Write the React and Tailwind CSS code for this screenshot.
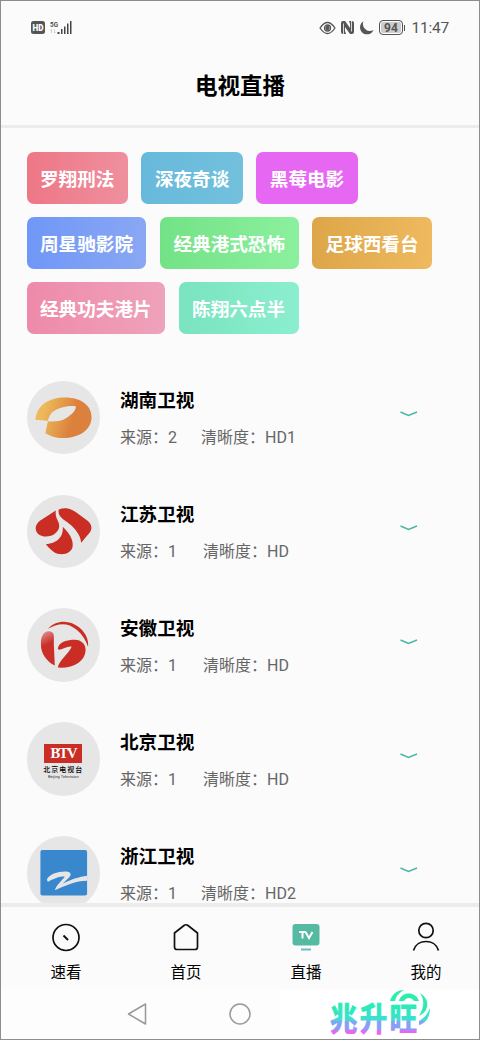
import React from "react";

const tags = [
  { name: "罗翔刑法", color: "bg-linear-to-r from-[#ee7786] to-[#ef8f9e]" },
  { name: "深夜奇谈", color: "bg-linear-to-r from-[#67b9dc] to-[#72c0dc]" },
  { name: "黑莓电影", color: "bg-[#e667f1]" },
  { name: "周星驰影院", color: "bg-linear-to-r from-[#7097f8] to-[#89a7f3]" },
  { name: "经典港式恐怖", color: "bg-linear-to-r from-[#73e286] to-[#8bf09e]" },
  { name: "足球西看台", color: "bg-linear-to-r from-[#dda648] to-[#efb95f]" },
  { name: "经典功夫港片", color: "bg-linear-to-r from-[#ee8aaa] to-[#efa2bb]" },
  { name: "陈翔六点半", color: "bg-linear-to-r from-[#7ae3bf] to-[#8befcf]" },
];

function HunanLogo() {
  return (
    <svg viewBox="0 0 74 74" className="h-full w-full">
      <defs>
        <linearGradient id="hunan" x1="0" y1="0" x2="1" y2="0.2">
          <stop offset="0.2" stopColor="#edb95a" />
          <stop offset="0.75" stopColor="#dc803d" />
        </linearGradient>
      </defs>
      <path
        d="M8.500 39C10 24 22 16.500 38 16.500C55 16.500 65.500 25 65 37C64.500 49 53 57.500 36 57.500C29 57.500 23 55 18.500 52.500L21 40.500C27 41.500 35 40.500 40 37C45 34 50 29 49 25.500C42 24 31 27 26 31C22.500 34.500 21.500 38 21 40Z"
        fill="url(#hunan)"
      />
    </svg>
  );
}

function JiangsuLogo() {
  return (
    <svg viewBox="0 0 74 74" className="h-full w-full" fill="#c92d23">
      <path d="M29 15.500L13 26C8 30 7.500 35 11 39C15 43 24 42.500 28 39C33 35 33.500 31 31 26C29 22 28.500 19 29 15.500Z" />
      <path d="M32 14.500C38 12 44 13.500 49 17L61 26C66 30 65.500 35 63 38L54.500 48C54 42 51 37 45 31C40 26 30 23 32 14.500Z" />
      <path d="M36 32C42 38 46.500 44 46 51C45.500 57 40 60 33 59.500C27 59 22 53 19 49.500C28 49 37 44 36 32Z" />
    </svg>
  );
}

function AnhuiLogo() {
  return (
    <svg viewBox="0 0 74 74" className="h-full w-full">
      <defs>
        <linearGradient id="anhui" x1="0" y1="0" x2="0.2" y2="1">
          <stop offset="0" stopColor="#e39a9a" />
          <stop offset="0.45" stopColor="#ca3029" />
        </linearGradient>
      </defs>
      <path d="M21 21C29 12 43 11 53 20C60 26 62 33 61.500 39C59 33 57 28 50 22C41 14 31 15 21 21Z" fill="#c92d23" />
      <path d="M15 29C17 23 23 22 26 25C27.500 27 27 31 27 36L28 58C20 54 14 46 14 37C14 34 14 31 15 29Z" fill="url(#anhui)" />
      <path d="M31 41C32 34 41 32 48 32C55 32 59.500 37 59 43C58 54 47 61 31 60C32 53 42 46 45 39C41 38 36 42 32 42Z" fill="#c92d23" />
    </svg>
  );
}

function BeijingLogo() {
  return (
    <div className="flex h-full w-full flex-col items-center pt-[22px]">
      <div className="flex h-[19px] w-[38px] items-center justify-center bg-[#c92d23] font-['Liberation_Serif',serif] text-[14.500px] font-bold tracking-[-1.500px] text-white">
        BTV
      </div>
      <div className="mt-[3px] text-[7px] leading-[8px] font-medium tracking-[1px] whitespace-nowrap text-black">
        北京电视台
      </div>
      <div className="text-[4px] leading-[5px] whitespace-nowrap text-[#333]">Beijing Television</div>
    </div>
  );
}

function ZhejiangLogo() {
  return (
    <svg viewBox="0 0 74 74" className="h-full w-full">
      <rect x="13.500" y="14" width="47" height="46" rx="2" fill="#3987cc" />
      <path
        d="M20 44C22 38 34 35 41 36C46 37 44 41 40 44L36 48C43 44 53 41 60.500 40V45C49 45 39 50 28 54.500C30 49 35 45 38 41C32 40 26 44 21 46Z"
        fill="#e6e6e6"
      />
    </svg>
  );
}

const channels = [
  { name: "湖南卫视", source: 2, quality: "HD1", gap: "ml-6", Logo: HunanLogo },
  { name: "江苏卫视", source: 1, quality: "HD", gap: "ml-[26px]", Logo: JiangsuLogo },
  { name: "安徽卫视", source: 1, quality: "HD", gap: "ml-[26px]", Logo: AnhuiLogo },
  { name: "北京卫视", source: 1, quality: "HD", gap: "ml-[26px]", Logo: BeijingLogo },
  { name: "浙江卫视", source: 1, quality: "HD2", gap: "ml-6", Logo: ZhejiangLogo },
];

function StatusBar() {
  return (
    <div className="flex h-[53px] shrink-0 items-center justify-between pr-[30px] pl-[30px] text-[#555]">
      <div className="flex items-center gap-[5px]">
        <svg width="14" height="13" viewBox="0 0 14 13">
          <rect width="14" height="13" rx="2.500" fill="#555" />
          <text x="1.500" y="9.700" fontSize="9" fontWeight="900" textLength="11" lengthAdjust="spacingAndGlyphs" fill="#fff">HD</text>
        </svg>
        <svg width="23" height="15" viewBox="0 0 23 15" fill="#444">
          <text x="0" y="6.500" fontSize="8" fontWeight="600" textLength="8" lengthAdjust="spacingAndGlyphs">5G</text>
          <path d="M1.500 9.500V13M0.500 10.500L1.500 9.500M4.500 9.500V13M5.500 12L4.500 13" stroke="#bbb" strokeWidth="0.700" />
          <path d="M7.500 12h2v2h-2zM11 9h1.500v5H11zM14 6.500h1.500V14H14zM17 3.500h1.500V14H17zM20 1h1.500v13H20z" />
        </svg>
      </div>

      <div className="flex items-center">
        <svg width="17" height="14" viewBox="0 0 17 14" fill="none" stroke="#555" strokeWidth="1.300">
          <path d="M1 7Q8.500 -4 16 7Q8.500 18 1 7Z" />
          <circle cx="8.500" cy="7" r="3" />
          <circle cx="8.500" cy="7" r="1.500" fill="#555" />
        </svg>
        <svg className="ml-[5px]" width="13" height="13" viewBox="0 0 13 13">
          <path d="M0 2Q0 0 2 0H4L9 7V3L8 0H11Q13 0 13 2V11Q13 13 11 13H9L4 6V10L5 13H2Q0 13 0 11Z" fill="#555" />
          <path d="M2.500 2.500V13M10.500 0V10.500" stroke="#fbfbfb" strokeWidth="0.800" />
        </svg>
        <svg className="ml-[5px]" width="15" height="14" viewBox="0 0 15 14" fill="#555">
          <path d="M4.500 0.300A7 7 0 1 0 14.500 9A7 7 0 0 1 4.500 0.300Z" />
        </svg>
        <div className="ml-[5px] flex h-[15px] w-[24px] items-center justify-center rounded-[4px] border border-[#555] bg-[#ccc] text-[12px] leading-3 font-bold ring-1 ring-white ring-inset">
          94
        </div>
        <div className="ml-[1px] h-[6px] w-[1.500px] bg-[#555]" />
        <span className="ml-[6px] text-[15.500px] leading-4 tracking-[-0.200px]">11:47</span>
      </div>
    </div>
  );
}

function ChannelRow({ channel }) {
  const { name, source, quality, gap, Logo } = channel;
  return (
    <div className="flex h-[113.800px] shrink-0 items-start">
      <div className="h-[73.500px] w-[73.500px] shrink-0 overflow-hidden rounded-full bg-[#e6e6e6]">
        <Logo />
      </div>
      <div className="ml-5 w-[280px] pt-[6.500px]">
        <h2 className="text-[18.600px] leading-[28px] font-bold text-black">{name}</h2>
        <p className="mt-[11px] flex text-[16px] leading-6 text-[#666]">
          <span>来源：{source}</span>
          <span className={gap}>清晰度：{quality}</span>
        </p>
      </div>
      <svg className="mt-[30.500px]" width="18" height="6" viewBox="0 0 18 6" fill="none" stroke="#48b8a3" strokeWidth="1.500">
        <path d="M0.500 1L8.500 4.500L17 1" />
      </svg>
    </div>
  );
}

function NavItem({ label, children }) {
  return (
    <div className="flex w-[120px] shrink-0 flex-col items-center pt-[14px]">
      <svg width="32" height="32" viewBox="0 0 32 32" fill="none" stroke="#111" strokeWidth="1.700">
        {children}
      </svg>
      <span className="mt-[9px] text-[15.500px] leading-[23px] text-black">{label}</span>
    </div>
  );
}

function Watermark() {
  return (
    <div className="absolute -right-px -bottom-px h-[50px] w-[200px] bg-white">
      <svg width="200" height="50" viewBox="0 0 200 50">
        <defs>
          <linearGradient id="brand" gradientUnits="userSpaceOnUse" x1="0" y1="0" x2="0" y2="46">
            <stop offset="0" stopColor="#2bf0a5" />
            <stop offset="0.450" stopColor="#2ee9bd" />
            <stop offset="0.660" stopColor="#42ddd4" />
            <stop offset="0.680" stopColor="#83a4f3" />
            <stop offset="0.870" stopColor="#8b9cf5" />
            <stop offset="0.890" stopColor="#ee63f0" />
          </linearGradient>
        </defs>
        <text
          transform="scale(0.850 1)"
          x="58.500"
          y="41.500"
          fontSize="33"
          fontWeight="900"
          letterSpacing="2"
          fill="url(#brand)"
        >
          兆升旺
        </text>
        <g fill="url(#brand)">
          <path d="M110 11C112 3 119 0 124 0C119 3 116 6 115 11Z" />
          <path d="M119 11C121 1 136 1 139 11H134C132 7 126 7 124 11Z" />
          <path d="M140 3C150 9 150 21 139 26C144 18 145 10 140 3Z" />
          <path d="M150 18C150 29 144 34 139 35V31C144 28 148 24 150 18Z" />
        </g>
      </svg>
    </div>
  );
}

function App() {
  return (
    <div className="relative flex h-[1040px] w-[480px] flex-col overflow-hidden border border-[#8d8d8d] bg-[#fbfbfb] font-[Roboto,'Noto_Sans_CJK_SC',sans-serif]">
      <StatusBar />
      <header className="flex h-[74px] shrink-0 items-center justify-center border-b-[3px] border-[#ececec] pb-[8px]">
        <h1 className="text-[22.500px] leading-8 font-bold text-black">电视直播</h1>
      </header>

      <main className="flex min-h-0 flex-1 flex-col overflow-hidden px-[25.500px] pt-[23.500px]">
        <div className="flex shrink-0 flex-wrap gap-x-[13.500px] gap-y-[13.200px]">
          {tags.map((t) => (
            <div
              key={t.name}
              className={`flex h-[52px] items-center rounded-[7px] px-[13.500px] pt-[6px] text-[18.600px] font-bold text-white ${t.color}`}
            >
              {t.name}
            </div>
          ))}
        </div>

        <div className="mt-[47px] flex flex-col">
          {channels.map((c) => (
            <ChannelRow key={c.name} channel={c} />
          ))}
        </div>
      </main>

      <nav className="flex h-[85px] shrink-0 overflow-hidden border-t-4 border-[#ececec] pl-[5px]">
        <NavItem label="速看">
          <circle cx="16" cy="16.500" r="13" />
          <path d="M13.500 14.500L18 19" strokeWidth="2" />
        </NavItem>
        <NavItem label="首页">
          <path d="M4.500 12L14 4.500Q16 3 18 4.500L27.500 12V26Q27.500 28.500 25 28.500H7Q4.500 28.500 4.500 26Z" />
        </NavItem>
        <NavItem label="直播">
          <rect x="2.500" y="3" width="27" height="21.500" rx="3" fill="#56b9a2" stroke="none" />
          <path d="M9 11H16M12.500 11V17.500M15.500 11L19 17L22.500 11" stroke="#fff" strokeWidth="2" />
          <path d="M11 28.500H21" stroke="#6bbcc8" strokeWidth="2" />
        </NavItem>
        <NavItem label="我的">
          <circle cx="16" cy="9.500" r="7.200" />
          <path d="M3.500 29.500C7 17.500 25 17.500 28.500 29.500" />
        </NavItem>
      </nav>

      <div className="flex h-[51px] shrink-0 items-center bg-[#fdfdfd] pl-[126px]">
        <svg width="20" height="22" viewBox="0 0 20 22" fill="none" stroke="#999" strokeWidth="1.500" strokeLinejoin="round">
          <path d="M1.500 11L18.500 1V21Z" />
        </svg>
        <svg className="ml-[82px]" width="22" height="22" viewBox="0 0 22 22" fill="none" stroke="#999" strokeWidth="1.500">
          <circle cx="11" cy="11" r="10" />
        </svg>
      </div>

      <Watermark />
    </div>
  );
}

export default App;
